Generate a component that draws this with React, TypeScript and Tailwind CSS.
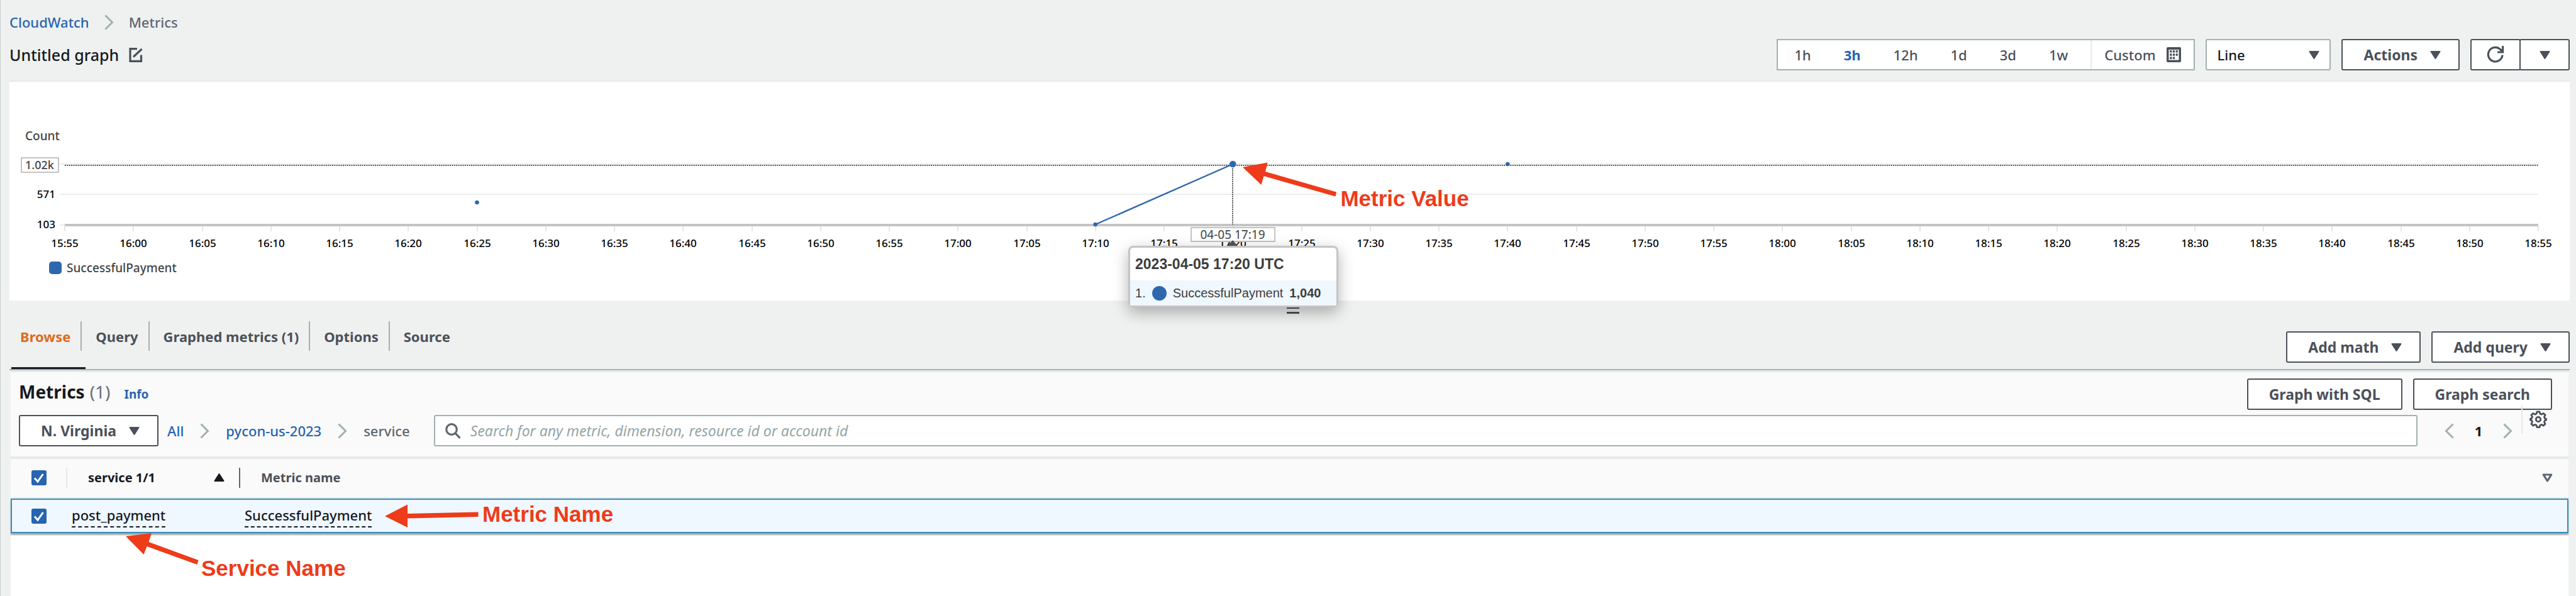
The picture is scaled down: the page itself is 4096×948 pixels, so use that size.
import type { ReactNode } from "react";

const TICKS = Array.from({ length: 37 }, (_, i) => {
  const minutes = 15 * 60 + 55 + i * 5;
  return `${Math.floor(minutes / 60)}:${String(minutes % 60).padStart(2, "0")}`;
});
const AXIS_START = 88;
const TICK_STEP = 109.25;
const tickX = (i: number) => AXIS_START + i * TICK_STEP;
const AXIS_END = tickX(36);

const RANGES = ["1h", "3h", "12h", "1d", "3d", "1w"];
const TABS = ["Browse", "Query", "Graphed metrics (1)", "Options", "Source"];

function Caret({ className = "" }: { className?: string }) {
  return (
    <svg aria-hidden="true" viewBox="0 0 17 13" className={`h-[13px] w-[17px] shrink-0 ${className}`}>
      <path d="M1.5 1h14L8.5 12Z" fill="currentColor" stroke="currentColor" strokeWidth="2" strokeLinejoin="round" />
    </svg>
  );
}

function Chevron({ flip = false }: { flip?: boolean }) {
  return (
    <svg aria-hidden="true" viewBox="0 0 15 25" className="h-[25px] w-[15px] shrink-0 text-[#a2b0b0]">
      <path d={flip ? "M13.5 1.5 2.5 12.5l11 11" : "M1.5 1.5l11 11-11 11"} fill="none" stroke="currentColor" strokeWidth="3" />
    </svg>
  );
}

function Button({ children, caret = false }: { children: ReactNode; caret?: boolean }) {
  return (
    <button
      type="button"
      className="flex h-[50px] shrink-0 items-center gap-5 whitespace-nowrap rounded-[3px] border-2 border-[#4b505a] bg-white px-[33px] text-[23px] font-bold text-[#4b505a]"
    >
      {children}
      {caret && <Caret className="-mr-[5px]" />}
    </button>
  );
}

function Checkbox({ label }: { label: string }) {
  return (
    <label className="relative ml-[33px] block size-6">
      <input type="checkbox" aria-label={label} defaultChecked className="block size-6 appearance-none rounded-[3px] bg-[#2764b1]" />
      <svg aria-hidden="true" viewBox="0 0 24 24" className="pointer-events-none absolute inset-0 size-6">
        <path d="M5 12.5 10 18 18.5 6" fill="none" stroke="#fff" strokeWidth="3" />
      </svg>
    </label>
  );
}

function Chart() {
  return (
    <svg role="img" aria-label="SuccessfulPayment count over time" viewBox="0 0 4071 348" className="block h-auto w-full">
      <g className="text-[19px]" fill="#444">
        <text x="25" y="93">Count</text>
        <text x="91" y="303">SuccessfulPayment</text>
      </g>
      <rect x="63" y="286" width="20" height="20" rx="5" fill="#2f67ad" />
      <g fill="#ebebeb">
        <rect x="80" y="130" width={AXIS_END - 80} height="2" />
        <rect x="80" y="178" width={AXIS_END - 80} height="2" />
        <rect x="80" y="227" width="8" height="2" />
      </g>
      <line x1={AXIS_START} x2={AXIS_END} y1="133" y2="133" stroke="#555" strokeWidth="2" strokeDasharray="2 1.4" />
      <rect x={AXIS_START} y="226" width={AXIS_END - AXIS_START} height="4" fill="#c4c4c4" />
      <g className="text-[17px]" textAnchor="end" fill="#000">
        <text x="73" y="185">571</text>
        <text x="73" y="233">103</text>
      </g>
      <rect x="19" y="121" width="59" height="23" fill="#fff" stroke="#c4c4c4" strokeWidth="2" />
      <text x="48" y="139" textAnchor="middle" fill="#444" className="text-[18px]">1.02k</text>
      {TICKS.map((tick, i) => (
        <g key={tick} className="text-[17px]" textAnchor="middle" fill="#000">
          <rect x={Math.round(tickX(i)) - 1} y="230" width="2" height="8" fill="#e6e6e6" />
          <text x={Math.round(tickX(i))} y="263">{tick}</text>
        </g>
      ))}
      <line x1="1945" x2="1945" y1="134" y2="227" stroke="#555" strokeWidth="2" strokeDasharray="2 1.4" />
      <path d={`M${tickX(15)} 227 L${tickX(17)} 131`} stroke="#2f67ad" strokeWidth="2.4" />
      <g fill="#2f67ad">
        <circle cx={tickX(6)} cy="192" r="3.3" />
        <circle cx={tickX(15)} cy="227" r="3.3" />
        <circle cx={tickX(17)} cy="131" r="5.3" />
        <circle cx={tickX(21)} cy="131" r="3.3" />
      </g>
      <rect x="1879" y="232" width="133" height="22" fill="#fff" stroke="#c4c4c4" strokeWidth="2" />
      <text x="1945" y="250" textAnchor="middle" fill="#444" className="text-[19px] font-normal">04-05 17:19</text>
      <path d="M1945 252l9 10h-18Z" fill="#555" />
    </svg>
  );
}

function Tooltip() {
  return (
    <div
      role="tooltip"
      className="absolute left-[43.7%] top-[261px] z-10 w-[334px] rounded-lg border-3 border-[#c4c4c4] bg-white font-normal text-[#3c3c3c] shadow-[0_8px_24px_rgba(0,0,0,0.3)] font-['Liberation_Sans',Arial,sans-serif]"
    >
      <div className="flex h-[52px] items-center px-2 text-[23px] font-bold">2023-04-05 17:20 UTC</div>
      <div className="flex h-10 items-center bg-[#eff7ff] px-2 text-[20px]">
        <span>1.</span>
        <span className="ml-2.5 size-[23px] rounded-full bg-[#2f67ad]" />
        <span className="ml-2.5">SuccessfulPayment</span>
        <b className="ml-2.5">1,040</b>
      </div>
    </div>
  );
}

function Note({ className, points, children, gap }: { className: string; points: string; children: string; gap: string }) {
  return (
    <div
      className={`pointer-events-none absolute z-20 flex whitespace-nowrap text-[35px] leading-[34px] font-bold text-[#ee3b1a] font-['Liberation_Sans',Arial,sans-serif] ${className}`}
    >
      <svg aria-hidden="true" className={`h-[60px] overflow-visible ${gap}`}>
        <polygon points={points} fill="currentColor" />
      </svg>
      {children}
    </div>
  );
}

export default function App() {
  return (
    <main className="flex min-h-screen flex-col border-l border-[#c8cccc] bg-[#eff1f0] pl-[14px] pr-[10px] font-['Noto_Sans','Open_Sans',sans-serif] text-[22px] leading-[30px] font-medium text-[#16191f]">
      <nav aria-label="Breadcrumb" className="flex h-[50px] items-center gap-6 pt-5">
        <a href="#cloudwatch" className="text-[#2764b1]">CloudWatch</a>
        <Chevron />
        <span className="text-[#5f6670]">Metrics</span>
      </nav>

      <header className="mt-3 flex h-[50px] items-center justify-between">
        <div className="flex items-center gap-4">
          <h1 className="text-[25px]">Untitled graph</h1>
          <button type="button" aria-label="Rename graph" className="text-[#4b505a]">
            <svg viewBox="0 0 22 23" className="h-[23px] w-[22px]">
              <path d="M13 1.7H2v19.6h17.5V11.5M7 14.5 20.5 2" fill="none" stroke="currentColor" strokeWidth="3.2" />
            </svg>
          </button>
        </div>
        <div className="flex gap-[17px]">
          <div className="flex h-[50px] items-center border-2 border-[#a2b0b0] bg-white text-[#4b505a]">
            {RANGES.map((range) => (
              <button
                key={range}
                type="button"
                className={range === "3h" ? "px-[26px] font-bold text-[#2764b1]" : "px-[26px]"}
              >
                {range}
              </button>
            ))}
            <button type="button" className="ml-[10px] flex h-full items-center gap-[18px] border-l-2 border-[#e7eaea] px-5">
              Custom
              <svg aria-hidden="true" viewBox="0 0 23 24" className="h-6 w-[23px]">
                <rect width="23" height="24" rx="2" fill="currentColor" />
                <rect x="3.5" y="4" width="16" height="16.5" fill="#fff" />
                <path d="M5.2 6.8h12.6M5.2 12h12.6M5.2 17.2h8" stroke="currentColor" strokeWidth="3.4" strokeDasharray="3.2 1.5" />
              </svg>
            </button>
          </div>
          <label className="relative flex items-center">
            <select aria-label="Graph type" defaultValue="Line" className="h-[50px] w-[199px] appearance-none rounded-[3px] border-2 border-[#a2b0b0] bg-white pl-4">
              <option>Line</option>
            </select>
            <Caret className="pointer-events-none absolute right-[18px] text-[#4b505a]" />
          </label>
          <Button caret>Actions</Button>
          <div className="flex text-[#4b505a]">
            <button type="button" aria-label="Refresh" className="flex h-[50px] w-20 items-center justify-center rounded-[3px] border-2 border-[#4b505a] bg-white">
              <svg viewBox="0 0 28 28" className="size-7">
                <path d="M25 14.5A11.3 11.3 0 1 1 22.5 6.5L25 9" fill="none" stroke="currentColor" strokeWidth="3.2" />
                <path d="M25.6 0v10H17" fill="none" stroke="currentColor" strokeWidth="3.2" />
              </svg>
            </button>
            <button type="button" aria-label="Refresh options" className="-ml-0.5 flex h-[50px] w-20 items-center justify-center rounded-[3px] border-2 border-[#4b505a] bg-white">
              <Caret />
            </button>
          </div>
        </div>
      </header>

      <section className="relative mt-4 border-t-2 border-[#e6e9e9] bg-white">
        <Chart />
        <Tooltip />
        <Note className="left-[48.18%] top-[128px] pt-[41px]" gap="w-[155px]" points="0,-33 39.5,-40.5 36,-26 149,6.5 147.5,13.5 33.5,-19 29.5,-5">
          Metric Value
        </Note>
      </section>

      <div role="separator" className="flex h-[22px] flex-col items-center gap-[5px] pl-2.5 pt-2.5">
        <span className="h-[3px] w-5 bg-[#4b505a]" />
        <span className="h-[3px] w-5 bg-[#4b505a]" />
      </div>

      <div className="flex h-[89px] items-stretch justify-between border-b-2 border-[#a2b0b0]">
        <div role="tablist" className="ml-[3px] flex gap-0.5">
          {TABS.map((tab, i) => (
            <button
              key={tab}
              type="button"
              role="tab"
              aria-selected={i === 0}
              className={
                i === 0
                  ? "flex border-b-3 border-[#16191f] pl-[14px] pr-1.5 pt-[11px] font-bold text-[#dd6b20]"
                  : "flex pl-[14px] pr-1.5 pt-[11px] font-bold text-[#4b505a]"
              }
            >
              <span className={i < TABS.length - 1 ? "flex h-[47px] items-center border-r-2 border-[#a2b0b0] pr-4" : "flex h-[47px] items-center"}>
                {tab}
              </span>
            </button>
          ))}
        </div>
        <div className="flex items-end gap-[17px] pb-[10px]">
          <Button caret>Add math</Button>
          <Button caret>Add query</Button>
        </div>
      </div>

      <section className="relative mx-0.5 mt-px flex-1 border-t-2 border-[#e6e9e9] bg-white">
        <div className="bg-[#fafafa] pb-4 pl-[13px] pr-[26px] pt-2.5">
          <div className="flex h-[50px] justify-between">
            <h2 className="flex items-baseline gap-2 text-[28px] leading-[42px] font-bold">
              Metrics <span className="font-normal text-[#687078]">(1)</span>
              <a href="#info" className="ml-[14px] text-[19px] text-[#2764b1]">Info</a>
            </h2>
            <div className="flex gap-[17px]">
              <Button>Graph with SQL</Button>
              <Button>Graph search</Button>
            </div>
          </div>
          <div className="mt-2 flex h-[50px] items-center">
            <Button caret>N. Virginia</Button>
            <nav aria-label="Metric path" className="ml-[14px] flex items-center gap-[26px]">
              <a href="#all" className="text-[#2764b1]">All</a>
              <Chevron />
              <a href="#pycon-us-2023" className="text-[#2764b1]">pycon-us-2023</a>
              <Chevron />
              <span className="text-[#5f6670]">service</span>
            </nav>
            <label className="relative ml-[38px] flex flex-1 items-center">
              <svg aria-hidden="true" viewBox="0 0 25 25" className="absolute left-[18px] size-[25px] text-[#5f6670]">
                <circle cx="10" cy="10" r="8.3" fill="none" stroke="currentColor" strokeWidth="3.2" />
                <path d="m15.8 15.8 7.7 8" stroke="currentColor" strokeWidth="3.2" />
              </svg>
              <input
                type="text"
                aria-label="Search metrics"
                placeholder="Search for any metric, dimension, resource id or account id"
                className="h-[50px] w-full rounded-[3px] border-2 border-[#a2b0b0] bg-white pl-14 pr-4 text-[23px] placeholder:font-normal placeholder:italic placeholder:text-[#95a5a6]"
              />
            </label>
            <div className="ml-[43px] flex items-center">
              <button type="button" aria-label="Previous page"><Chevron flip /></button>
              <span className="w-[78px] text-center font-bold">1</span>
              <button type="button" aria-label="Next page"><Chevron /></button>
            </div>
            <div className="-mt-4 ml-[14px] mr-2 flex h-[46px] items-center self-start border-l-2 border-[#e6e9e9] pl-[11px]">
              <button type="button" aria-label="Preferences" className="text-[#4b505a]">
                <svg viewBox="0 0 28 28" className="size-7">
                  <path
                    d="M12 1.8h4l.8 3.2 2.6 1.1 2.9-1.7 2.8 2.8-1.6 2.9 1 2.5 2 .6v2l-2 .6-1 2.5 1.6 3-2.8 2.7-2.9-1.6-2.6 1.1-.8 3.2h-4l-.8-3.2-2.6-1.1-2.9 1.6-2.8-2.7 1.6-3-1-2.5-2-.6v-2l2-.6 1-2.5-1.6-2.9 2.8-2.8 2.9 1.7L11.2 5Z"
                    fill="none"
                    stroke="currentColor"
                    strokeWidth="2.8"
                    strokeLinejoin="round"
                  />
                  <circle cx="14" cy="14" r="3.7" fill="none" stroke="currentColor" strokeWidth="2.8" />
                </svg>
              </button>
            </div>
          </div>
        </div>

        <table className="w-full table-fixed border-separate border-spacing-0 border-t-4 border-[#e6e9e9] text-left">
          <colgroup>
            <col className="w-[90px]" />
            <col className="w-[275px]" />
            <col />
          </colgroup>
          <thead className="bg-[#fafafa] text-[20px]">
            <tr className="h-[63px]">
              <th scope="col" className="border-b-2 border-[#e6e9e9] p-0 pb-0.5">
                <div className="flex h-8 items-center border-r-2 border-[#e6e9e9]">
                  <Checkbox label="Select all metrics" />
                </div>
              </th>
              <th scope="col" className="border-b-2 border-[#e6e9e9] p-0 pb-0.5">
                <div className="flex h-8 items-center justify-between border-r-2 border-[#5f6670] pl-[33px] pr-[23px]">
                  service 1/1
                  <Caret className="rotate-180" />
                </div>
              </th>
              <th scope="col" className="border-b-2 border-[#e6e9e9] p-0 pb-0.5">
                <div className="flex h-8 items-center justify-between pl-[33px] pr-[25px] text-[#4b505a]">
                  Metric name
                  <svg aria-hidden="true" viewBox="0 0 17 14" className="h-[14px] w-[17px]">
                    <path d="M2.2 2h12.6L8.5 12Z" fill="#fff" stroke="#5f6670" strokeWidth="3.2" strokeLinejoin="round" />
                  </svg>
                </div>
              </th>
            </tr>
          </thead>
          <tbody>
            <tr className="h-[55px] bg-[#eff7ff] shadow-[0_3px_2px_rgba(0,0,0,0.35)] outline-2 -outline-offset-2 outline-[#3690bd]">
              <td className="p-0"><Checkbox label="Select post_payment" /></td>
              <td className="p-0 pl-[7px]">
                <span className="inline-block h-[37px] border-b-2 border-dashed border-[#16191f] pt-0.5">post_payment</span>
              </td>
              <td className="p-0 pl-[7px]">
                <span className="inline-block h-[37px] border-b-2 border-dashed border-[#16191f] pt-0.5">SuccessfulPayment</span>
              </td>
            </tr>
          </tbody>
        </table>

        <Note className="left-[595px] top-[209px]" gap="w-[155px]" points="0,20 36,1.5 36,16 148.5,13.5 148.5,21 36,23.5 36,38">
          Metric Name
        </Note>
        <Note className="left-[183px] top-[295px]" gap="w-[120px]" points="0,-34 41,-39 36.5,-25 115.5,4 113.5,11 33.5,-18 28.5,-5">
          Service Name
        </Note>
      </section>
    </main>
  );
}
